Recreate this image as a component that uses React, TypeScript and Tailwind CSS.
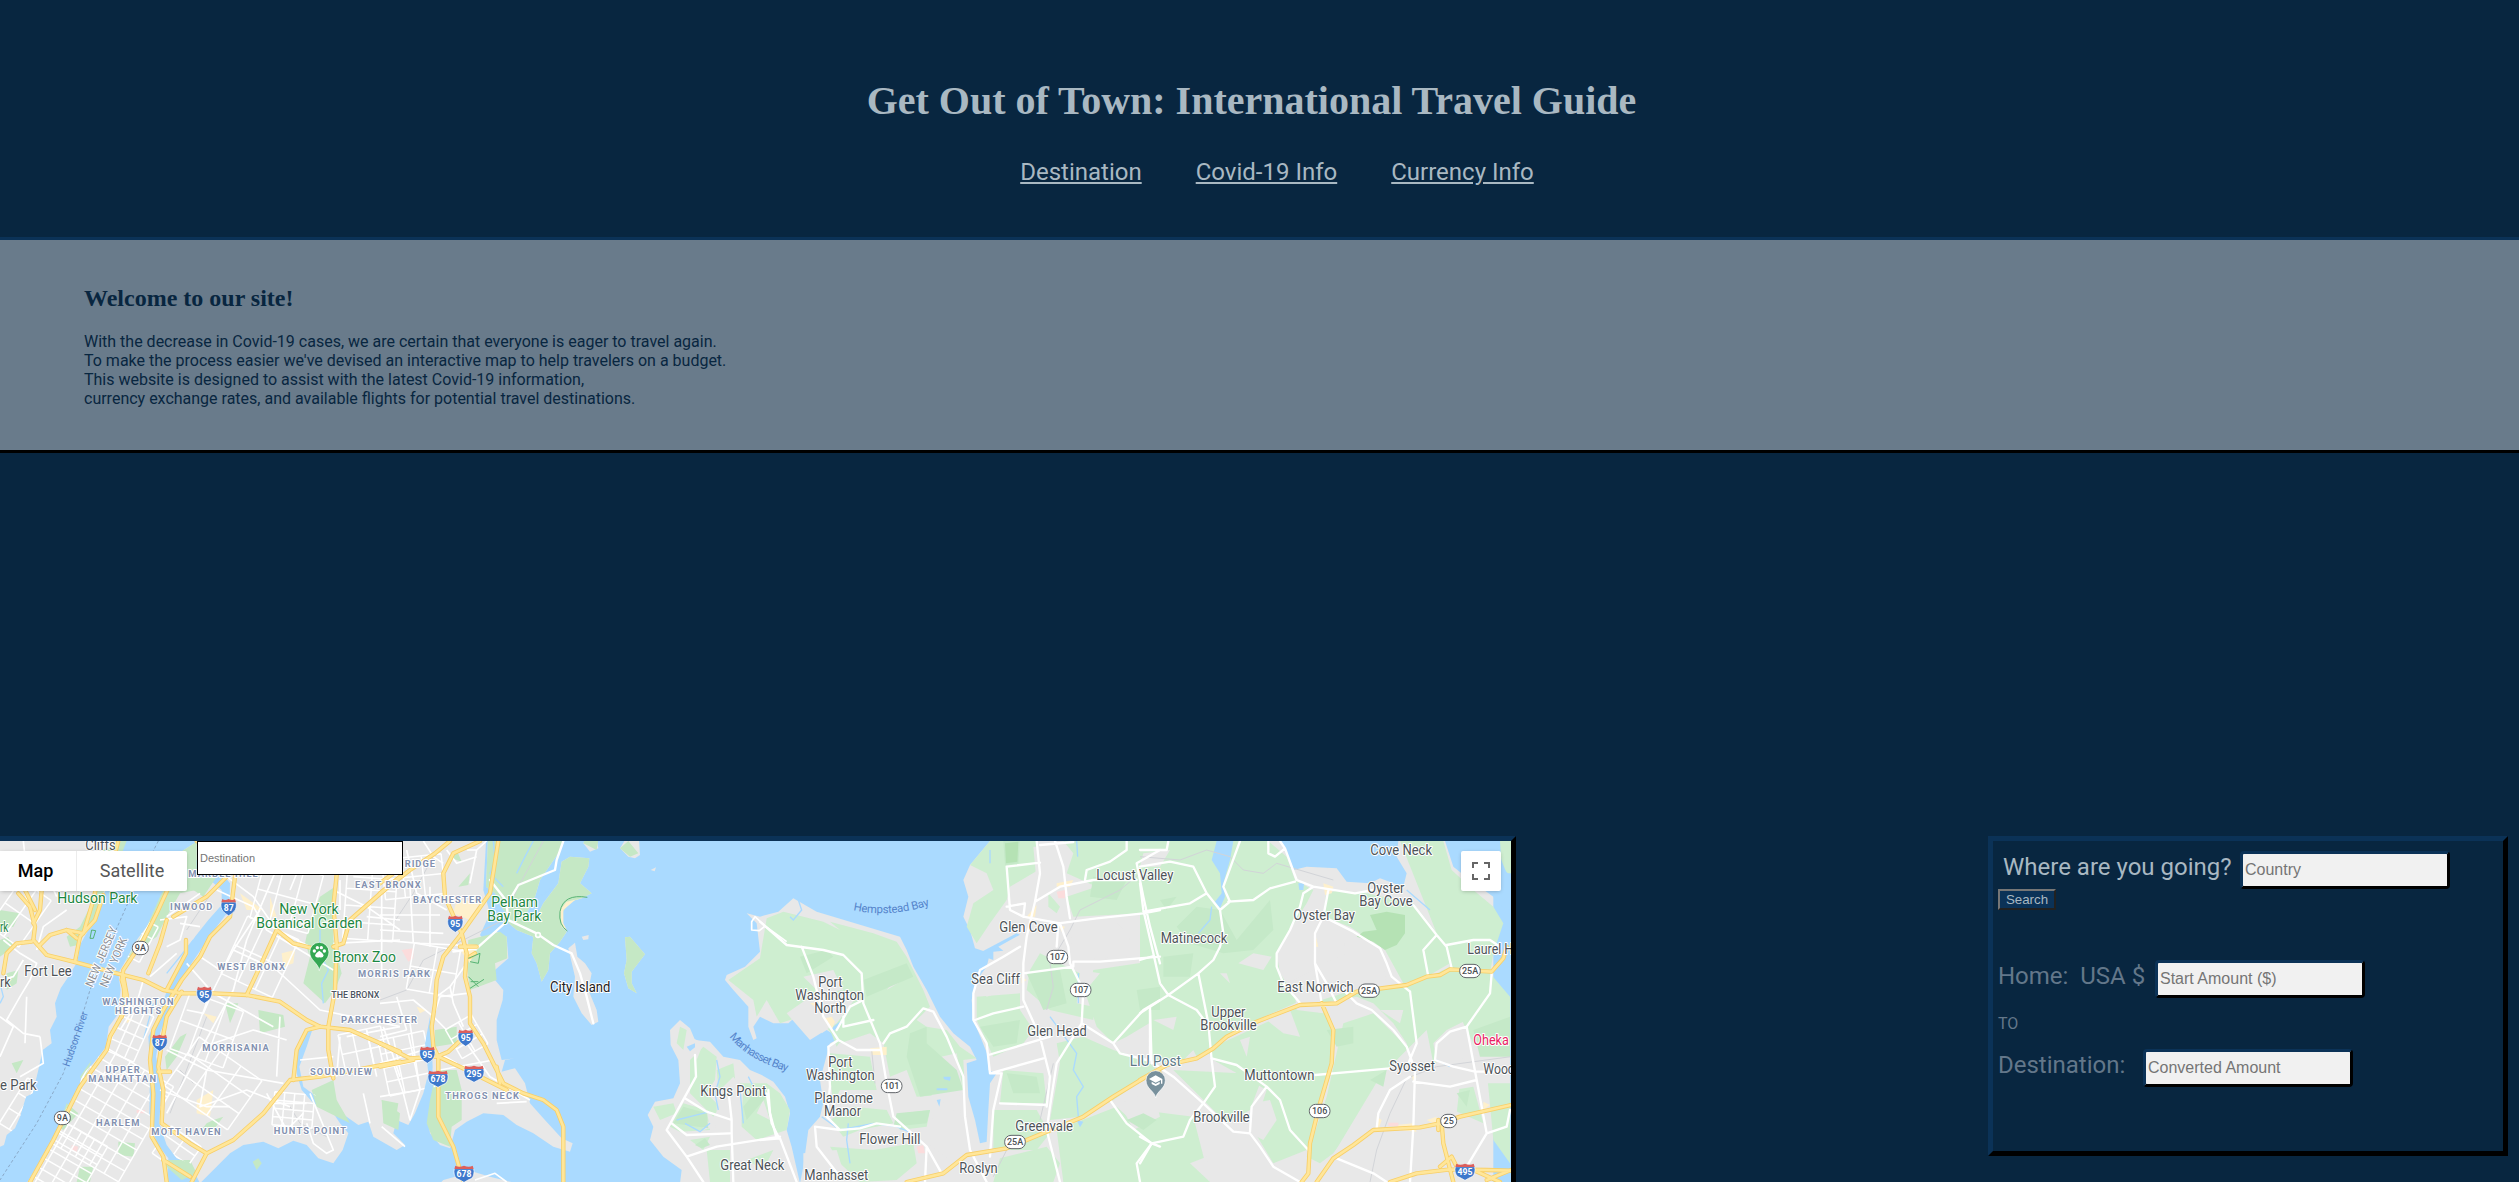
import React from "react";

type Tiled = [number, string];
// Map artwork is authored in four overlapping tiles, at three units per pixel.
const OFFSET = [0, 1140, 2280, 3420];

const land: Tiled[] = [
  [0, "M0 0H385L365 60 345 105 330 160 306 200 288 270 262 305 240 345 232 395 205 440 182 475 165 520 170 560 150 600 155 640 128 660 115 720 98 790 78 800 60 860 45 895 20 915 12 945 0 950Z"],
  [0, "M620 0L620 60 650 110 690 160 688 240 650 290 612 345 575 400 530 480 505 550 480 610 468 680 485 760 478 880 500 945 530 985 570 1000 600 1060 640 1020 690 970 730 945 790 935 835 955 880 932 920 945 955 985 1000 1000 1028 960 1045 910 1020 880 1000 850 940 820 905 780 890 730 888 660 915 600 940 590 920 650 898 710 910 770 950 800 1010 840 1040 860 1075 885 1105 875 1120 920 1190 960 1215 945 1180 910 1190 870 1225 885 1245 850 1270 790 1285 730 1275 640 1290 560 1295 640 1300 760 1305 820 1285 870 1290 910 1320 945 1350 955 1365 900 1400 875 1450 850 1510 855 1550 885 1600 910 1660 950 1710 965 1718 940 1685 925 1630 865 1590 820 1575 760 1545 715 1505 725 1515 690 1545 685 1505 690 1490 630 1490 570 1508 510 1510 480 1485 450 1485 420 1525 385 1520 320 1490 305 1458 335 1440 315 1470 250 1450 180 1460 0Z"],
  [0, "M590 0V35L548 62 520 110 490 185 475 230 440 290 410 330 375 395 355 430 362 480 352 555 326 590 318 650 280 700 245 735 235 790 200 830 175 900 140 960 80 1060H500L505 985 470 940 458 900 448 850 450 700 445 620 475 555 505 470 545 380 585 320 625 270 665 225 665 180 630 150 600 140 575 105 610 70 620 0Z"],
  [1, "M325 0H560L545 55 480 150 465 200 440 250 400 265 370 240 345 190 318 170Z"],
  [1, "M545 95L570 80 628 85 625 110 600 160 635 190 605 205 570 215 545 250 545 290 560 305 540 335 510 370 505 420 485 455 470 400 455 370 460 320 410 300 375 270 385 255 470 260 490 220 535 160Z"],
  [1, "M565 355L585 338 592 380 615 400 635 430 625 480 650 540 655 575 635 585 605 550 580 500 585 440Z"],
  [1, "M735 322L750 320 795 373 755 425 755 460 770 490 745 475 732 430 740 390Z"],
  [1, "M610 40L625 0H775L780 75 765 85 745 80 720 55 735 30 650 30 655 55 630 65Z"],
  [1, "M812 120L828 112 824 124ZM605 320L626 315 625 328 610 330Z"],
  [1, "M870 600L900 570 930 595 945 630 990 635 1030 680 1080 690 1110 720 1145 735 1180 755 1215 800 1230 850 1220 900 1235 950 1260 1060H900L905 1020 850 980 810 930 820 890 803 855 825 815 880 805 900 760 895 690 872 645Z"],
  [1, "M1035 450L1040 435 1095 410 1140 365 1130 280 1100 250 1140 260 1195 245 1240 205 1310 245 1560 320 1580 360 1600 410 1640 480 1680 560 1720 610 1770 650 1790 690 1760 700 1765 800 1785 870 1800 940 1820 935 1825 840 1830 760 1850 730 1825 720 1825 680 1805 630 1780 570 1775 510 1790 450 1820 410 1830 370 1785 355 1770 300 1750 260 1765 200 1750 150 1770 105 1830 33 1840 0 3340 0V1060H1260L1270 1010 1285 900 1320 860 1330 820 1320 750 1350 640 1380 625 1340 600 1325 610 1310 560 1280 565 1270 540 1225 580 1180 580 1140 560 1120 590 1130 625 1120 630 1105 590 1105 530 1060 480Z"],
  [0, "M1330 1050L1420 1025 1470 1040 1550 1060H1320Z"],
];
// Park colouring laid over the shoreline shapes.
const park: Tiled[] = [
  [0, "M305 60L365 33 380 33 330 160 300 200 285 260 260 300 235 345 210 350 200 320 240 290 270 230Z"],
  [0, "M0 240L60 250 40 290 0 300ZM0 330L25 320 40 350 0 380ZM20 430L55 420 50 460 20 480ZM35 700L70 690 50 730Z"],
  [0, "M548 62L590 35 590 180 540 190 500 260 470 320 400 370 375 395 440 290 480 200Z"],
  [0, "M960 200L1005 170 1000 330 1025 430 1005 480 975 520 910 460 930 380 915 340 930 270Z"],
  [0, "M575 145L650 140 610 200 580 180ZM675 520L715 520 690 580ZM775 540L850 555 855 590 780 610ZM540 620L560 610 530 680 500 720 495 680ZM240 740L275 690 250 760ZM640 870L670 860 640 900 600 905 620 880ZM200 820L235 850 190 900 175 890ZM240 1010L280 1010 270 1056 230 1056ZM355 935L405 940 400 980 355 975Z"],
  [0, "M490 990L570 990 590 1030 545 1050 500 1010ZM935 780L1000 750 1010 810 1050 880 950 830ZM1145 810L1195 820 1190 850 1150 850Z"],
  [0, "M758 995L775 985 785 1000 770 1020Z"],
  [1, "M325 0H560L545 55 480 150 465 200 440 250 400 265 370 240 345 190 318 170Z"],
  [1, "M545 95L570 80 628 85 625 110 600 160 635 190 605 205 570 215 545 250 545 290 560 305 540 335 510 370 505 420 485 455 470 400 455 370 460 320 410 300 375 270 385 255 470 260 490 220 535 160Z"],
  [1, "M735 322L750 320 795 373 755 425 755 460 770 490 745 475 732 430 740 390Z"],
  [1, "M265 330L360 305 380 320 382 385 345 400 350 450 270 480 260 400Z"],
  [1, "M165 600L230 590 230 640 165 650ZM150 810L170 720 230 720 245 780 245 870 215 890 210 950 160 930 140 880ZM5 810L60 850 55 900 10 880ZM230 60L245 95 215 85ZM270 130L265 165 235 170Z"],
  [1, "M610 40L625 0 660 0 650 60ZM720 55L745 33 775 70 750 80Z"],
];
const mint: Tiled[] = [
  [1, "M900 590L920 600 910 660 890 640ZM930 690L970 650 1010 680 1005 750 980 790 1020 830 1000 860 930 790ZM1010 720L1060 700 1070 790 1020 820ZM820 830L880 820 890 850 840 870ZM870 890L910 820 980 840 990 900 900 905ZM1080 760L1160 760 1200 790 1230 840 1220 900 1130 930 1085 890ZM930 930L990 920 970 960ZM980 960L1050 960 1050 1056 990 1056ZM1100 990L1180 960 1150 1020Z"],
  [2, "M-95 450L0 385 20 265 70 245 190 275 240 300 210 275 340 310 410 335 440 380 490 480 510 530 470 570 500 590 560 600 600 650 650 685 610 690 615 790 470 800 440 720 390 740 370 640 330 610 240 640 180 570 120 560 60 580 20 510 -10 560 -20 510Z"],
  [2, "M430 850L510 840 500 890 420 900 405 870ZM210 670L330 680 350 780 240 780 220 820 210 740ZM210 870L280 830 380 840 400 880 300 900 250 920ZM210 950L340 960 460 940 470 1000 410 1050 300 1056 240 1000ZM210 600L250 620 230 650Z"],
  [2, "M690 33H830L835 120 750 170 740 210 690 280 650 340 620 290 640 220 700 180 680 130 630 105ZM865 190L900 230 890 250 865 230ZM910 33H1200V240L1150 250 940 260 920 200 1010 170 920 130 940 70ZM840 370L920 410 960 430 950 520 1000 530 1000 570 870 540 800 480 810 420ZM650 500L780 490 780 540 820 600 790 640 700 680 650 570ZM730 720L850 730 860 820 720 820ZM1000 420L1200 390V560L1100 620 1060 640 1010 590 980 500ZM890 640L970 620 1060 660 1160 690 1190 720 1060 810 960 860 870 870 900 700ZM700 840L830 840 870 910 830 960 700 960ZM720 985L860 950 900 1000 880 1056H700ZM890 900L1070 830 1200 950V1056H910Z"],
  [3, "M0 33H270L290 33 385 33 440 80 465 150 520 180 500 220 450 300 410 370 420 430 475 515 350 570 240 640 180 680 60 700 30 690 30 540 0 550ZM560 180L680 190 820 220 900 320 930 400 860 440 790 460 735 360 630 290 550 260ZM780 33H910L935 120 1000 180 1060 230 1090 280 1060 370 1050 430 1040 500 980 570 920 600 880 640 890 700 820 740 800 640 760 580 700 520 650 500 540 520 580 600 580 700 570 740 500 960 400 1000 340 900 380 780 220 690 200 660 480 530 640 480 800 470 890 430 930 410ZM610 580L700 550 800 650 800 720 740 760 690 800 640 890 580 970 540 1000 500 980 560 800ZM100 720L300 730 360 760 330 840 260 880 200 820ZM0 840L160 860 210 1056H0ZM920 430L1050 430 1110 500V680L1000 640 970 580ZM820 570L880 560 860 620ZM850 800L890 790 880 830ZM940 780L1000 770 1030 880 940 840ZM1040 720L1110 740V1000L1060 930Z"],
  [3, "M1080 33H1113V130L1100 130 1080 80Z"],
];
const holes: Tiled[] = [
  [2, "M80 550L180 480 290 500 230 580 150 630ZM130 440L220 420 250 480 180 490ZM870 470L900 460 890 530ZM930 280L1060 270 1110 320 1100 380 940 390ZM650 460L700 440 740 480 680 500ZM820 50L900 50 900 150 830 160ZM1080 820L1180 780 1200 860 1120 900ZM500 690L590 670 610 790 520 830ZM130 970L230 960 260 1056H130ZM520 850L600 840 620 960 580 1000 500 940ZM960 420L1020 430 970 490ZM1010 330L1040 330 1030 370ZM410 440L430 450 380 480Z"],
  [3, "M295 400L340 370 395 380 370 420ZM340 820L390 810 410 870 370 930 330 910ZM380 570L450 540 480 620 430 610ZM300 630L330 620 320 680ZM530 280L600 290 620 370 550 400ZM460 450L520 420 550 550 470 540ZM680 420L730 400 740 450ZM800 660L860 600 880 700 1110 660V760H960L950 850 850 880 820 1056H530L600 940 720 740ZM40 570L110 560 100 600ZM150 1000L200 980 210 1056ZM240 430L260 430 270 460ZM720 540L790 540 780 580ZM480 120L620 110 640 170 560 190ZM10 70L90 60 60 110 0 110ZM130 690L160 660 180 700Z"],
  [1, "M1010 790L1060 740 1090 780 1080 930 1010 930ZM1130 850L1150 810 1170 870ZM930 620L970 640 950 690ZM960 860L1010 890 970 900Z"],
];
const darker: Tiled[] = [
  [2, "M730 33H780L775 100 735 105ZM1000 140L1100 150 1070 210 990 200ZM450 610L500 590 500 640 590 720 610 780 480 800 440 680ZM310 450L440 400 460 440 320 500ZM120 380L200 360 220 380 140 430ZM800 430L900 420 920 520 850 540ZM1130 480L1200 470V540H1140ZM410 850L510 840 500 880 400 890ZM740 730L830 740 840 790 760 790ZM660 590L780 570 770 640 700 650ZM1100 870L1150 850 1190 870 1150 900Z"],
  [3, "M170 230L240 240 290 330 390 210 400 300 340 360 250 370 150 340 110 290ZM70 380L160 370 150 440 70 440ZM560 600L640 590 640 640 590 650ZM950 790L990 780 980 830ZM1000 600L1110 560V680H1020ZM690 750L740 720 730 770ZM60 210L110 200 80 240Z"],
  [1, "M880 880L910 830 980 850 985 895ZM1090 830L1130 780 1160 800 1100 870ZM945 945L975 925 990 945 965 955Z"],
];
const deep: Tiled[] = [
  [3, "M690 255L740 245 795 255 795 310 770 345 735 360 700 335 650 320 670 305 710 300Z"],
  [2, "M735 40L775 35 772 95 738 100Z"],
];
const inlet: Tiled[] = [
  [3, "M230 33L280 33 270 90 250 160 255 200 240 235 225 215 245 190 240 130 215 90ZM420 33H775L770 80 800 130 790 170 720 145 690 160 620 155 590 115 500 110 460 120 440 70ZM915 33H1080L1085 110 1113 140V240L1090 235 1060 200 990 150 940 110Z"],
  [3, "M475 160L492 160 490 180 478 180Z"],
  [2, "M665 365L770 310 780 314 715 350 730 362 700 365 700 390 685 385ZM215 595L245 570 246 580 222 602ZM550 740H572L570 752 552 748ZM530 810L542 808 538 830ZM530 775H562V781H530ZM950 870L970 875 960 892Z"],
  [1, "M920 650L945 640 945 652 930 664Z"],
];
const streams: Tiled[] = [
  [0, "M960 300V370L985 420 965 460 970 520M0 460L10 500 0 520M500 430L580 330M430 630L460 520M385 130L400 33"],
  [1, "M340 33L345 90 330 130 370 170M410 130L435 80 460 33M1010 690L1020 740 1005 790 1015 840M890 870L930 860 990 845M915 880L960 905 990 880M1080 780L1090 880M1105 740L1120 770M480 200L520 170"],
  [2, "M115 210L125 240 100 270 90 260M870 560L950 670 940 720 970 770 950 800 955 860M185 860L240 900 340 880 410 890 480 920M265 880L260 930 270 1000M690 60V100M950 33L953 80M955 430V520"],
  [3, "M215 230L210 270 175 310M800 180L870 240M890 690L930 710"],
];
const pale: Tiled[] = [
  [0, "M590 810L640 780 630 860 590 850ZM845 370L885 360 880 400 850 410ZM720 190L790 240 740 240ZM610 550L650 560 640 580ZM810 200L830 260 810 260ZM380 560L400 570 380 580Z"],
  [1, "M230 210L300 215 270 270 220 250ZM240 340L290 345 270 400 240 360ZM110 530L140 540 120 550ZM540 240L560 215 622 200 585 210 550 240 550 280 562 304 545 290Z"],
  [2, "M195 565L215 560 225 575 215 600ZM330 655L380 650 380 675 335 675ZM890 160L940 150 930 170 890 170ZM895 285L915 290 905 305ZM800 260L830 225 825 260ZM150 520L180 515 165 530ZM875 620V655M785 440L800 450 785 460Z"],
  [3, "M550 160L580 170 575 190 555 195ZM525 310L535 350 525 350ZM815 735L830 740 820 755ZM770 885L820 880 830 905 780 900ZM860 870L890 860 890 885ZM1030 815L1050 825 1030 840ZM710 860L725 870 715 900Z"],
];
const pink: Tiled[] = [
  [0, "M410 840H435V850H410ZM215 945L235 950 230 965 215 960Z"],
  [1, "M65 360L100 355 100 385 85 395Z"],
  [2, "M890 185L915 180 915 205 895 205ZM470 950L490 945 495 970 475 970Z"],
  [3, "M745 878H775V888H745Z"],
];
const thin: Tiled[] = [
  [0, "M10 330L60 370 110 400 90 450 60 500 20 570 70 610 120 620M0 560L40 590 0 680M200 240L130 290 110 360M0 130L60 150 90 230M70 390L40 440 0 450M80 500L75 640M120 620L130 700 60 740M70 33L75 80M0 90L130 110M130 110L170 200"],
  [0, "M640 110L760 200 830 300 930 350M700 360L830 420 960 540 1200 590M560 400L640 490 820 590M640 640L760 600 860 630M500 660L620 720 850 760M620 720L600 830 740 780 870 830M560 540L610 550 640 480 700 360 780 240M860 40L820 140 740 330M930 33L870 180M740 330L700 480 580 700 500 850M480 780L620 830 690 830M840 560L830 740 M900 690L1000 680M1000 340L1200 330M1020 150V240M1060 140L1190 150M1100 260L1200 270M1000 180L1100 230 1200 300M1040 620L1200 590M1100 600L1130 740M1150 590L1200 740M650 180L760 230 800 300 1000 420M600 380L660 420 700 400"],
  [0, "M480 270L560 260 540 330 500 350M500 260L600 190M450 440L530 370M540 280L600 290M430 450L410 520 360 600M800 790L860 900 910 850M820 820L920 820M930 790L1000 960 980 970 940 940 920 880M1020 620L1010 740M1090 790L1110 880"],
  [1, "M0 255H180M0 300L190 310M5 190V420M90 170L100 340M130 33L160 80 190 100M80 60L110 190 200 240M150 170V350M0 330L120 340 230 345 290 360M260 60L290 60 270 160M200 60L230 100 290 80M0 520L100 510 160 560 200 600M0 620L80 600M90 580L120 780 90 870 70 790 40 700M50 500L80 600M0 800L120 780M5 890L75 950M160 660L230 700M170 500L210 470 260 400M210 470L220 520 250 590M160 560L180 500 260 490M180 720L340 690M260 640L330 740 450 810M350 820L440 815M0 700L130 660M290 60L320 33"],
  [1, "M285 1050L345 1030 380 1056M1115 300V275L1125 260 1155 288 1138 302ZM1155 288L1220 335"],
];
const roads: Tiled[] = [
  [1, "M550 33L530 90 525 120 415 165 380 225 385 270 290 355 220 365M330 150L385 220M385 270L470 310 520 345 575 370 600 430 620 500 640 580"],
  [1, "M945 675L948 740 915 800 860 900 920 980 970 1056M875 880L920 915 1050 910M915 805L980 845 1055 870 1045 780M1055 870V910L1060 1056M920 980L1010 950 1200 920M1160 790L1175 880 1195 920"],
  [2, "M0 275L80 345 190 360 250 375 305 430 310 520 360 640 380 760 400 860 500 950 545 1030M125 350L160 440 190 560 235 630 205 650M250 560V590L340 570M310 510L270 530 230 600M235 630L290 660 360 660M370 640L390 610 440 590 490 535 520 545 560 620 610 740 615 860 630 960 680 1056M205 650L210 770 200 860 240 900 300 895 350 880 420 890M240 900L165 890 170 950 240 1040M25 780L30 850 50 925M0 930L60 925 110 1056M500 950L495 1056"],
  [2, "M830 33L840 130 825 215 800 320 790 400 790 510 840 620 870 740 860 830M740 110L840 98M740 110L750 240 790 260 795 220 740 230M825 215L900 170 1000 150 1130 150M885 33L910 110 920 200 930 265M975 150L980 120 1050 95 1100 60V33M790 260L900 280 925 350 930 400 970 480 965 580 1060 640 1080 670 1160 690M895 280L1010 265 1150 250 1200 240M790 430L940 410 940 395 1020 395 1200 380M645 570L700 550 790 530M780 350L730 380 660 420 640 490 640 570 680 640 690 730 850 685M685 675L870 620M690 730H725L700 840 690 980M720 820L860 825M895 280L890 350M965 580L890 700 870 830 860 900 900 1056M1060 640L1150 540 1200 510M1170 530V690M1050 810L1100 880 1175 940 1130 1000 1140 1056M1175 940L1200 950M1130 100L1150 200 1170 290 1200 400M840 45L940 36M1130 100L1200 60"],
  [3, "M0 60L80 60 85 33M0 160L10 240 40 370 60 460 85 495M0 110L90 95 160 110 200 190 240 240 250 310 240 350 220 390 175 430 85 495 0 550M10 245L150 220 200 190M0 390L40 378M85 495L170 540 200 580M175 430L205 580 215 690 225 770 190 820 150 870 130 920 35 940 0 1000M240 240L270 215 250 170 300 33M265 215L340 210 390 175 465 155M385 33V70L405 80 435 55 420 33M435 55L470 150 520 170 645 190 700 180M520 170L490 190 480 230 450 300 410 370 410 410 430 460 485 525M565 180L550 260 640 305 720 355 740 400 755 440 810 485M550 260L525 310V400L560 460 590 520M525 400L545 520M820 225L890 315 920 350 935 415M890 315L850 360 865 440M920 345L1000 330 1050 330 1080 350"],
  [3, "M590 460L650 520 695 540 760 600 800 650 825 720 820 890 810 1056M810 485L830 640 805 700M1055 430L1050 490 980 590 1010 750 1040 910 980 1010M980 590L930 605 890 640 885 690 940 710 1005 725H1100M525 735L640 725 750 715M810 740L750 780 715 850 710 895M820 755L930 770 1010 750M40 700L100 740 190 820 280 905 330 910 360 950 400 1010 480 1056M215 685L290 705 380 770 420 810 450 900 505 960M380 770L335 830 330 905M30 540L35 700M590 985L700 1030 740 1056M1040 910L1100 890 1110 840M0 920L35 940"],
];
const hwy: Tiled[] = [
  [0, "M55 190L90 230 105 290 100 330 140 375 220 395 350 430 430 450 490 480 545 490 640 490 740 495 840 515 920 570 960 590 1050 600 1130 635 1200 665"],
  [0, "M75 180L105 240M125 180L120 240 100 280M120 345L150 315 200 300 250 310 280 210 300 120M310 195L285 270 240 320 225 395M10 430L20 370 50 340 95 335M200 300L230 325"],
  [0, "M500 185L470 250 430 330 370 420 365 450 380 500M545 90L500 185M640 60L590 33M355 33L340 90M500 270L480 340 445 430M370 440L380 495 365 560"],
  [0, "M370 435L375 540 330 620 320 660 240 770 210 830 160 930 90 1056"],
  [0, "M705 140L690 260 630 320 600 380 545 450 490 540 460 600 450 690 460 790 455 920 490 980 500 1056"],
  [0, "M545 485L500 560 485 640 475 710 490 780 485 880 570 940 620 970 575 1056M620 970L700 930 790 850 870 750 960 740 1200 695M490 990L570 1040M558 330V370L500 480M475 725H510"],
  [0, "M680 140L620 200 520 260M1010 135L1000 230 1010 340 1005 480 985 590 985 660 1000 745M960 590L920 600 890 660 880 750M830 300L780 410 740 495M830 300L880 340 960 360M1000 350L1030 340 1050 270 1170 165 1200 140"],
  [1, "M0 190L90 120 165 70 210 33M0 160L40 130M300 33L220 70 190 130 195 200 230 280 245 310 190 380 170 450 165 520 155 590 160 650 175 680 175 860 220 950 250 1056"],
  [1, "M355 33L330 190 280 260 245 310 260 370 255 440 270 500 270 580 310 640 345 710 370 760 430 790 490 810 530 840 550 890V1056M0 640L90 685 170 680 205 665 265 610M0 710L100 690M175 680L260 720 380 780M350 710L360 760M240 350L290 350M270 380L285 370"],
  [2, "M440 1056L550 1030 620 975 740 955 860 905 970 860 1060 800 1150 745M1195 735L1200 730"],
  [3, "M0 750L80 705 170 685 220 655 260 620 350 575 480 525 590 520 650 485 800 465 860 440 900 435 930 418 1055 425 1090 385 1100 350M545 520L580 600 575 700 540 820 510 940 505 1030 485 1056M530 1056L580 985 640 945 700 900 840 892 900 880 960 860 1113 825"],
  [3, "M750 1056L830 1030 930 1018 1040 1020 1113 1022M905 880L910 940 940 1056M1000 1020L1080 1056M1040 1050L1113 1020M895 870V900M900 1010L935 980 950 1010"],
];
const rails: Tiled[] = [
  [0, "M620 560L590 640 510 850M540 720L580 760M870 830L900 880 980 920M660 150L560 300"],
  [1, "M490 33L410 180 370 270 250 330 130 390 80 480 0 510M170 60L100 190 40 280"],
  [2, "M1140 130L1080 180 960 240 930 300 870 400 880 470 860 540M335 660L345 760M740 960L700 1040M880 700L840 870"],
  [3, "M0 80L120 90 200 60 270 80 310 120 370 130 410 100 580 150M1113 680L890 710 800 745 750 850 710 960 690 1056"],
];

// Parallel street families, described by centre, size, angle and counts.
const grids = [
  [330, 850, 250, 330, 30, 5, 9], [190, 1000, 180, 220, 30, 4, 7], [420, 330, 60, 120, 28, 2, 3],
  [390, 610, 90, 150, 24, 3, 4], [640, 760, 230, 180, 35, 3, 3], [620, 600, 170, 180, 20, 3, 2],
  [780, 380, 170, 190, 25, 3, 2], [1110, 230, 150, 200, 4, 2, 4], [1090, 660, 130, 120, -12, 3, 2],
  [1220, 700, 140, 170, -12, 3, 4], [60, 250, 110, 170, 35, 2, 2], [880, 840, 120, 100, 5, 4, 4],
  [1300, 420, 140, 140, 10, 2, 2], [530, 960, 110, 100, 35, 2, 3], [1400, 620, 90, 100, -30, 2, 3],
  [860, 200, 180, 180, 15, 3, 2], [70, 830, 70, 160, 32, 2, 3], [1240, 140, 180, 120, -6, 3, 2],
];
const gridPath = (w: number, h: number, nx: number, ny: number) => {
  let d = "";
  for (let i = 0; i <= nx; i++) d += `M${-w / 2 + (w * i) / nx} ${-h / 2}v${h}`;
  for (let j = 0; j <= ny; j++) d += `M${-w / 2} ${-h / 2 + (h * j) / ny}h${w}`;
  return d;
};

const Paths = ({ items, ...rest }: { items: Tiled[] } & React.SVGProps<SVGGElement>) => (
  <g {...rest}>
    {items.map(([t, d], i) => (
      <path key={i} d={d} transform={`translate(${OFFSET[t]} 0)`} />
    ))}
  </g>
);

type Label = [number, number, number, string, number];
const towns: Label[] = [
  [0, 256, 59, "Cliffs", 91], [0, 73, 437, "Fort Lee", 142], [0, 0, 470, "rk", 32], [0, 0, 780, "e Park", 110],
  [1, 961, 797, "Kings Point", 198], [1, 1021, 1019, "Great Neck", 192],
  [2, 175, 470, "Port", 72], [2, 106, 509, "Washington", 206], [2, 163, 548, "North", 96],
  [2, 205, 710, "Port", 72], [2, 138, 749, "Washington", 206], [2, 163, 818, "Plandome", 176], [2, 192, 857, "Manor", 111],
  [2, 298, 941, "Flower Hill", 183], [2, 133, 1049, "Manhasset", 192], [2, 598, 1028, "Roslyn", 115],
  [2, 766, 902, "Greenvale", 173], [2, 718, 305, "Glen Cove", 175], [2, 634, 461, "Sea Cliff", 146],
  [2, 802, 617, "Glen Head", 178], [2, 1009, 149, "Locust Valley", 231],
  [3, 691, 74, "Cove Neck", 185], [3, 682, 188, "Oyster", 111], [3, 658, 227, "Bay Cove", 160], [3, 460, 269, "Oyster Bay", 185],
  [3, 62, 338, "Matinecock", 200], [3, 412, 485, "East Norwich", 229], [3, 214, 560, "Upper", 102], [3, 181, 599, "Brookville", 169],
  [3, 313, 749, "Muttontown", 210], [3, 160, 875, "Brookville", 169], [3, 748, 722, "Syosset", 137],
  [3, 1030, 732, "Woodbury", 165], [3, 982, 371, "Laurel Hollow", 226],
];
const districts: Label[] = [
  [0, 565, 140, "MARBLE HILL", 208], [0, 510, 239, "INWOOD", 127], [0, 1065, 173, "EAST BRONX", 197], [0, 652, 419, "WEST BRONX", 203],
  [0, 1074, 440, "MORRIS PARK", 216], [0, 307, 524, "WASHINGTON", 214], [0, 345, 551, "HEIGHTS", 139], [0, 1023, 578, "PARKCHESTER", 228],
  [0, 607, 662, "MORRISANIA", 199], [0, 930, 734, "SOUNDVIEW", 186], [0, 316, 728, "UPPER", 103], [0, 265, 755, "MANHATTAN", 203],
  [0, 288, 887, "HARLEM", 130], [0, 454, 914, "MOTT HAVEN", 208], [0, 821, 911, "HUNTS POINT", 217],
  [1, 74, 110, "RIDGE", 91], [1, 99, 219, "BAYCHESTER", 205], [1, 196, 806, "THROGS NECK", 221],
];
const parks: Label[] = [
  [0, 172, 219, "Hudson Park", 240], [0, 838, 252, "New York", 178], [0, 769, 294, "Botanical Garden", 318], [0, 998, 396, "Bronx Zoo", 190],
  [1, 334, 231, "Pelham", 140], [1, 322, 273, "Bay Park", 162], [0, 0, 305, "rk", 25],
];

const Labels = ({ items, adjust = "spacingAndGlyphs", ...rest }: { items: Label[]; adjust?: string } & React.SVGProps<SVGGElement>) => (
  <g {...rest}>
    {items.map(([t, x, y, s, len], i) => (
      <text key={i} x={OFFSET[t] + x} y={y} textLength={len} lengthAdjust={adjust}>{s}</text>
    ))}
  </g>
);

const Interstate = ({ t, x, y, n }: { t: number; x: number; y: number; n: string }) => {
  const w = n.length > 2 ? 30 : 23;
  return (
    <g transform={`translate(${OFFSET[t] + x} ${y})`}>
      <path d={`M${-w + 1} -15H${w - 1}Q${w + 3} 3 ${w - 7} 14Q10 20 0 26Q-10 20 ${-w + 7} 14Q${-w - 3} 3 ${-w + 1} -15Z`} fill="#3d78cc" stroke="#fff" strokeWidth="2" />
      <path d={`M${-w + 1} -14L${-w + 4} -24Q${-w / 2} -18 0 -24Q${w / 2} -18 ${w - 4} -24L${w - 1} -14Z`} fill="#dc5f5c" />
      <text y="11" textAnchor="middle" fontSize="26" fontWeight="700" fill="#fff">{n}</text>
    </g>
  );
};
const StateRoute = ({ t, x, y, n }: { t: number; x: number; y: number; n: string }) => {
  const w = n.length > 2 ? 31 : 24;
  return (
    <g transform={`translate(${OFFSET[t] + x} ${y})`}>
      <rect x={-w} y="-20" width={w * 2} height="40" rx="19" fill="#fff" stroke="#5f6368" strokeWidth="3" />
      <text y="10" textAnchor="middle" fontSize="27" fontWeight="500" fill="#4a4f54">{n}</text>
    </g>
  );
};

function MapArt() {
  return (
    <svg className="block h-[341px] w-[1511px]" viewBox="0 33 4533 1023" preserveAspectRatio="none" fontFamily="Roboto, sans-serif">
      <defs>
        <clipPath id="shore">
          {land.map(([t, d], i) => <path key={i} d={d} transform={`translate(${OFFSET[t]} 0)`} />)}
        </clipPath>
        <path id="manhasset" d="M2188 620Q2240 690 2385 732" />
        <path id="hempstead" d="M2560 241Q2680 265 2800 222" />
      </defs>
      <rect y="33" width="4533" height="1023" fill="#aadaff" />
      <Paths items={land} fill="#e8e8e8" />
      <Paths items={mint} fill="#ceeed0" />
      <Paths items={holes} fill="#e8e8e8" />
      <Paths items={darker} fill="#c5e9c8" />
      <Paths items={park} fill="#c5e8c5" />
      <Paths items={deep} fill="#b5e2b4" />
      <Paths items={inlet} fill="#aadaff" />
      <Paths items={pale} fill="#fef0cc" />
      <Paths items={pink} fill="#fbdcdc" />
      <Paths items={streams} fill="none" stroke="#aadaff" strokeWidth="4" />
      <Paths items={rails} fill="none" stroke="#d2d4d8" strokeWidth="3" />
      <g clipPath="url(#shore)" fill="none" stroke="#fff" strokeWidth="4.5">
        {grids.map(([x, y, w, h, a, nx, ny], i) => (
          <path key={i} transform={`translate(${x} ${y}) rotate(${a})`} d={gridPath(w, h, nx, ny)} />
        ))}
      </g>
      <Paths items={thin} fill="none" stroke="#fff" strokeWidth="5" strokeLinejoin="round" />
      <Paths items={roads} fill="none" stroke="#fff" strokeWidth="7" strokeLinejoin="round" strokeLinecap="round" />
      <Paths items={hwy} fill="none" stroke="#f8cf68" strokeWidth="13" strokeLinejoin="round" strokeLinecap="round" />
      <Paths items={hwy} fill="none" stroke="#ffe699" strokeWidth="8" strokeLinejoin="round" strokeLinecap="round" />
      <path d="M475 33L410 160 330 340 270 480 240 580 190 730 110 880 0 1050" fill="none" stroke="#8aa9c8" strokeWidth="3" strokeDasharray="9 7" />
      <circle cx="1614" cy="315" r="7" fill="#ceeed0" stroke="#fff" strokeWidth="5" />
      <path d="M1762 202Q1690 190 1680 245Q1675 285 1702 303M1405 385L1440 370 1435 400 1410 395M1405 440L1435 470M1410 475L1452 448M1412 455H1435M270 325L275 300 287 302 280 325Z" fill="none" stroke="#57b373" strokeWidth="3" />

      <g stroke="#fff" strokeWidth="6" strokeLinejoin="round" style={{ paintOrder: "stroke" }}>
        <Labels items={towns} fill="#4d5358" fontSize="42" />
        <Labels items={districts} adjust="spacing" fill="#8391b0" fontSize="28" fontWeight="700" />
        <Labels items={parks} fill="#1c8742" fontSize="43" />
        <Labels items={[[1, 510, 485, "City Island", 181]]} fill="#202124" fontSize="42" />
        <Labels items={[[0, 994, 503, "THE BRONX", 144]]} fill="#4d5562" fontSize="26" fontWeight="500" />
        <Labels items={[[2, 1109, 707, "LIU Post", 154]]} fill="#5c7886" fontSize="42" />
        <Labels items={[[3, 1000, 645, "Oheka Castle", 222]]} fill="#e91e63" fontSize="42" />
        <g fill="#8b8f96" fontSize="34">
          <text transform="translate(277 473) rotate(-67)" textLength="192" lengthAdjust="spacingAndGlyphs">NEW JERSEY</text>
          <text transform="translate(320 474) rotate(-67)" textLength="158" lengthAdjust="spacingAndGlyphs">NEW YORK</text>
        </g>
      </g>
      <text transform="translate(208 712) rotate(-71)" textLength="172" lengthAdjust="spacingAndGlyphs" fill="#5584cb" fontSize="32">Hudson River</text>
      <g fill="#5584cb" fontSize="34">
        <text><textPath href="#manhasset" textLength="205">Manhasset Bay</textPath></text>
        <text><textPath href="#hempstead" textLength="232">Hempstead Bay</textPath></text>
      </g>

      <Interstate t={0} x={686} y={231} n="87" />
      <Interstate t={0} x={613} y={494} n="95" />
      <Interstate t={0} x={479} y={638} n="87" />
      <Interstate t={1} x={226} y={281} n="95" />
      <Interstate t={1} x={257} y={623} n="95" />
      <Interstate t={1} x={142} y={674} n="95" />
      <Interstate t={1} x={174} y={746} n="678" />
      <Interstate t={1} x={282} y={731} n="295" />
      <Interstate t={1} x={252} y={1031} n="678" />
      <Interstate t={3} x={975} y={1025} n="495" />
      <StateRoute t={0} x={421} y={354} n="9A" />
      <StateRoute t={0} x={187} y={864} n="9A" />
      <StateRoute t={2} x={892} y={381} n="107" />
      <StateRoute t={2} x={962} y={480} n="107" />
      <StateRoute t={2} x={395} y={768} n="101" />
      <StateRoute t={2} x={765} y={936} n="25A" />
      <StateRoute t={3} x={687} y={482} n="25A" />
      <StateRoute t={3} x={990} y={423} n="25A" />
      <StateRoute t={3} x={539} y={843} n="106" />
      <StateRoute t={3} x={926} y={873} n="25" />

      <g transform="translate(958 366)">
        <path d="M0 56C-3 32-29 26-29 0A29 29 0 0 1 29 0C29 26 3 32 0 56Z" fill="#34a853" stroke="#fff" strokeWidth="2" />
        <g fill="#fff">
          <circle cx="-15" cy="-3" r="5" /><circle cx="-6" cy="-13" r="5" /><circle cx="6" cy="-13" r="5" /><circle cx="15" cy="-3" r="5" />
          <path d="M0-4Q10 2 13 10Q12 19 0 16Q-12 19-13 10Q-10 2 0-4Z" />
        </g>
      </g>
      <g transform="translate(3467 751)">
        <path d="M0 53C-3 32-29 26-29 0A29 29 0 0 1 29 0C29 26 3 32 0 53Z" fill="#78909c" stroke="#fff" strokeWidth="2" />
        <path d="M-20-4L0-15 20-4V10H16V-1L0 7ZM-12 4L0 11 12 4V11L0 17-12 11Z" fill="#fff" />
      </g>
    </svg>
  );
}

const field =
  "h-[38px] w-[210px] rounded-[4px] border-[3px] border-t-[#0b3257] border-l-[#0b3257] border-r-black border-b-black bg-[#f1f1f1] px-[2px] font-['Liberation_Sans',sans-serif] text-[16px] text-black placeholder:text-[#757575] placeholder:opacity-100";

export default function App() {
  return (
    <div className="h-[1182px] w-full overflow-hidden bg-[#082640] font-[Roboto,sans-serif] text-[#a9b8c2]">
      <header className="flex h-[240px] flex-col items-center border-b-[3px] border-[#0b3257] pt-[78px]">
        <h1 className="-ml-[16px] font-['Liberation_Serif',serif] text-[40px] leading-[46px] font-bold">
          Get Out of Town: International Travel Guide
        </h1>
        <nav className="ml-[35px] flex gap-[54px] pt-[34px] text-[24px] leading-[28px]">
          <a className="underline" href="#destination">Destination</a>
          <a className="underline" href="#covid">Covid-19 Info</a>
          <a className="underline" href="#currency">Currency Info</a>
        </nav>
      </header>

      <section className="h-[213px] border-b-[3px] border-black bg-[#697b8b] pt-[44px] pl-[84px] text-[#082640]">
        <h2 className="font-['Liberation_Serif',serif] text-[24px] leading-[28px] font-bold">Welcome to our site!</h2>
        <p className="pt-[20px] text-[16px] leading-[19px]">
          With the decrease in Covid-19 cases, we are certain that everyone is eager to travel again.<br />
          To make the process easier we've devised an interactive map to help travelers on a budget.<br />
          This website is designed to assist with the latest Covid-19 information,<br />
          currency exchange rates, and available flights for potential travel destinations.
        </p>
      </section>

      <main className="flex justify-between pt-[383px] pr-[11px]">
        <section id="destination" className="relative h-[346px] w-[1516px] overflow-hidden border-t-[5px] border-r-[5px] border-t-[#0b3257] border-r-black">
          <MapArt />
          <div className="absolute top-[10px] left-0 flex h-[40px] rounded-r-[2px] bg-white text-[18px] leading-[40px] shadow-[0_1px_4px_-1px_rgba(0,0,0,0.3)]">
            <button className="w-[77px] border-r border-[#ececec] pr-[5px] font-medium text-black">Map</button>
            <button className="w-[110px] text-[#565656]">Satellite</button>
          </div>
          <input
            placeholder="Destination"
            className="absolute top-0 left-[197px] h-[34px] w-[206px] rounded-none border border-black bg-white px-[2px] font-['Liberation_Sans',sans-serif] text-[11px] placeholder:text-[#757575] placeholder:opacity-100"
          />
          <button aria-label="Toggle fullscreen" className="absolute top-[10px] right-[10px] flex size-[40px] items-center justify-center rounded-[2px] bg-white shadow-[0_1px_4px_-1px_rgba(0,0,0,0.3)]">
            <svg className="size-[18px]" viewBox="0 0 18 18" fill="none" stroke="#666" strokeWidth="2">
              <path d="M1 6V1H6M12 1H17V6M17 12V17H12M6 17H1V12" />
            </svg>
          </button>
        </section>

        <section id="currency" className="h-[320px] w-[520px] border-[5px] border-t-[#0b3257] border-r-black border-b-black border-l-[#0b3257] p-[5px] text-[24px] leading-[28px] text-[#63778a]">
          <div className="flex h-[43px] items-start pt-[5px] pl-[5px] text-[#a9b8c2]">
            <label className="w-[237px] pt-[2px]">Where are you going?</label>
            <input placeholder="Country" className={field} />
          </div>
          <button className="block h-[21px] w-[58px] border-2 border-t-[#767676] border-r-[#212121] border-b-[#212121] border-l-[#767676] bg-[#0b3257] font-['Liberation_Sans',sans-serif] text-[13.33px] leading-[17px] text-[#a9b8c2]">
            Search
          </button>
          <div className="flex pt-[50px]">
            <label className="w-[157px] pt-[2px] whitespace-pre">Home:  USA $</label>
            <input placeholder="Start Amount ($)" className={field} />
          </div>
          <p className="pt-[16px] text-[16px] leading-[19px]">TO</p>
          <div className="flex pt-[16px]">
            <label className="w-[145px] pt-[2px]">Destination:</label>
            <input placeholder="Converted Amount" className={field} />
          </div>
        </section>
      </main>
    </div>
  );
}
